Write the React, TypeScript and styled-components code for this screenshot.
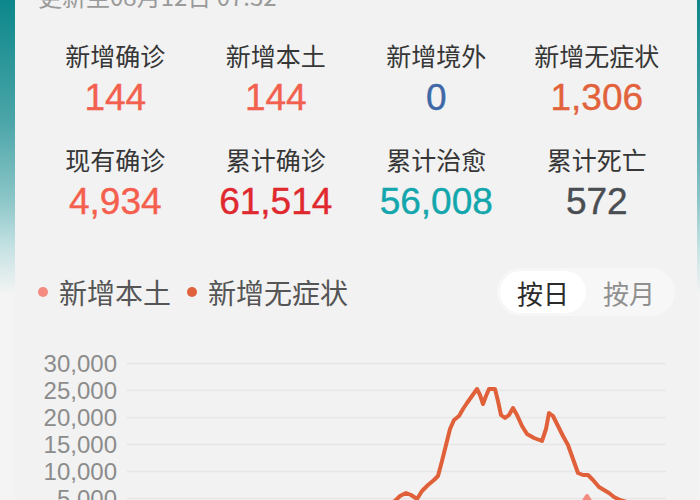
import styled, { createGlobalStyle } from "styled-components";

const GlobalStyle = createGlobalStyle`
  html, body {
    margin: 0;
    padding: 0;
    overflow: hidden;
  }
  body {
    font-family: "Noto Sans CJK SC", "Noto Sans", sans-serif;
  }
`;

const Page = styled.div`
  width: 700px;
  height: 500px;
  overflow: hidden;
  box-sizing: border-box;
  padding: 0 3px 0 15px;
  background: linear-gradient(
    180deg,
    #0c878b 0px,
    #4aa5a8 120px,
    #8cc6c8 200px,
    #c8e3e4 250px,
    #f4f4f4 295px
  );
`;

const Card = styled.div`
  width: 682px;
  height: 520px;
  box-sizing: border-box;
  padding: 0 20px;
  background: #f2f2f2;
`;

const DateLine = styled.div`
  margin: -19px 0 0 3px;
  font-size: 24px;
  line-height: 30px;
  color: #9a9a9a;
`;

const StatsGrid = styled.div`
  margin-top: 29px;
  display: grid;
  grid-template-columns: repeat(4, 1fr);
  row-gap: 26px;
`;

const Stat = styled.div`
  display: flex;
  flex-direction: column;
  align-items: center;
  gap: 8px;
`;

const StatLabel = styled.div`
  font-size: 25px;
  line-height: 30px;
  color: #363636;
`;

const StatValue = styled.div<{ $color: string }>`
  font-family: "Liberation Sans", Arial, sans-serif;
  font-size: 37px;
  line-height: 40px;
  color: ${(p) => p.$color};
  -webkit-text-stroke: 0.4px ${(p) => p.$color};
`;

const ChartHead = styled.div`
  margin-top: 46px;
  height: 48px;
  display: flex;
  align-items: center;
  justify-content: space-between;
`;

const Legend = styled.div`
  display: flex;
  align-items: center;
  gap: 16px;
  padding-left: 3px;
`;

const LegendItem = styled.div`
  display: flex;
  align-items: center;
  gap: 11px;
  font-size: 28px;
  line-height: 32px;
  color: #555;
`;

const Dot = styled.span<{ $color: string }>`
  width: 10px;
  height: 10px;
  border-radius: 50%;
  background: ${(p) => p.$color};
`;

const Toggle = styled.div`
  display: flex;
  padding: 3px;
  margin-right: 2px;
  border-radius: 24px;
  background: #f7f7f7;
`;

const ToggleBtn = styled.button<{ $active?: boolean }>`
  width: 86px;
  height: 42px;
  border: none;
  border-radius: 21px;
  padding: 0;
  font-family: inherit;
  font-size: 26px;
  background: ${(p) => (p.$active ? "#ffffff" : "transparent")};
  color: ${(p) => (p.$active ? "#2b2b2b" : "#8f8f8f")};
`;

const Chart = styled.svg`
  display: block;
  margin-top: 23px;
`;

const stats = [
  { label: "新增确诊", value: "144", color: "#f2614f" },
  { label: "新增本土", value: "144", color: "#f2614f" },
  { label: "新增境外", value: "0", color: "#3f69a6" },
  { label: "新增无症状", value: "1,306", color: "#e2623b" },
  { label: "现有确诊", value: "4,934", color: "#f5604e" },
  { label: "累计确诊", value: "61,514", color: "#e0292f" },
  { label: "累计治愈", value: "56,008", color: "#13a7ad" },
  { label: "累计死亡", value: "572", color: "#4a4d52" },
];

const ticks = ["30,000", "25,000", "20,000", "15,000", "10,000", "5,000", "0"];

// page coords of the asymptomatic line
const orangePts: [number, number][] = [
  [127, 524], [200, 522], [260, 520], [320, 516], [360, 512], [385, 506],
  [395, 502], [400, 497], [406, 494], [411, 496], [417, 500], [422, 492],
  [428, 486], [434, 481], [438, 477], [442, 462], [446, 446], [450, 430],
  [454, 421], [459, 417], [463, 410], [467, 404], [472, 397], [477, 390],
  [480, 396], [483, 405], [486, 397], [489, 390], [495, 390], [498, 402],
  [501, 416], [505, 419], [509, 416], [513, 409], [517, 416], [522, 427],
  [527, 435], [534, 439], [542, 442], [546, 430], [549, 414], [553, 417],
  [558, 427], [563, 437], [568, 446], [573, 460], [578, 474], [583, 476],
  [588, 476], [593, 481], [599, 488], [604, 491], [609, 494], [614, 498],
  [620, 501], [630, 504], [650, 508], [666, 510],
];

const pinkPts: [number, number][] = [
  [560, 520], [576, 512], [582, 505], [587, 497], [592, 505], [598, 512], [610, 520],
];

const toPath = (pts: [number, number][]) =>
  pts.map(([x, y], i) => `${i ? "L" : "M"}${x - 35} ${y - 340}`).join(" ");

export default function App() {
  return (
    <>
      <GlobalStyle />
      <Page>
        <Card>
          <DateLine>更新至08月12日 07:32</DateLine>

          <StatsGrid>
            {stats.map((s) => (
              <Stat key={s.label}>
                <StatLabel>{s.label}</StatLabel>
                <StatValue $color={s.color}>{s.value}</StatValue>
              </Stat>
            ))}
          </StatsGrid>

          <ChartHead>
            <Legend>
              <LegendItem>
                <Dot $color="#f38b80" />
                新增本土
              </LegendItem>
              <LegendItem>
                <Dot $color="#e0623c" />
                新增无症状
              </LegendItem>
            </Legend>
            <Toggle>
              <ToggleBtn $active>按日</ToggleBtn>
              <ToggleBtn>按月</ToggleBtn>
            </Toggle>
          </ChartHead>

          <Chart width="642" height="200" viewBox="0 0 642 200">
            {ticks.map((t, i) => {
              const y = 24.5 + i * 27;
              return (
                <g key={t}>
                  <line x1="92" x2="631" y1={y} y2={y} stroke="#e6e6e6" strokeWidth="1.5" />
                  <text
                    x="82"
                    y={y}
                    textAnchor="end"
                    dominantBaseline="central"
                    fill="#8c8c8c"
                    fontSize="24"
                    fontFamily="'Liberation Sans', Arial, sans-serif"
                  >
                    {t}
                  </text>
                </g>
              );
            })}
            <path
              d={toPath(pinkPts)}
              fill="none"
              stroke="#f38b80"
              strokeWidth="4"
              strokeLinejoin="round"
              strokeLinecap="round"
            />
            <path
              d={toPath(orangePts)}
              fill="none"
              stroke="#e0603a"
              strokeWidth="4"
              strokeLinejoin="round"
              strokeLinecap="round"
            />
          </Chart>
        </Card>
      </Page>
    </>
  );
}
